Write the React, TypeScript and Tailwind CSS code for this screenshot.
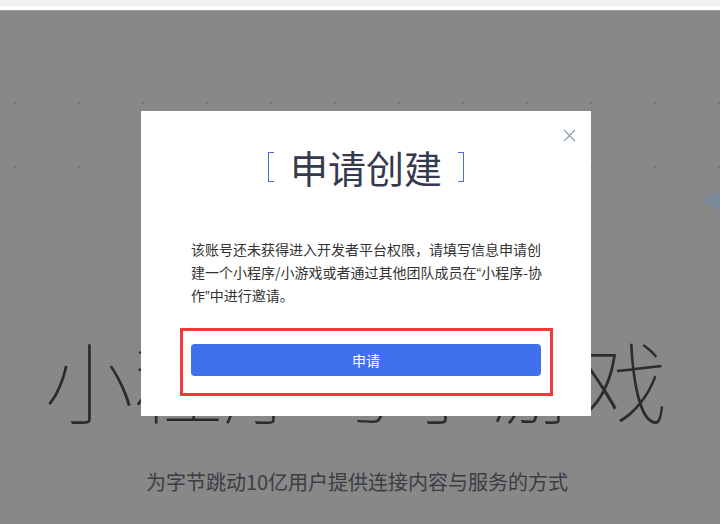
import React from "react";

const font = { fontFamily: '"Noto Sans CJK SC", "Noto Sans", sans-serif' };

function DotRow() {
  return (
    <div className="flex gap-[61px] pl-[12.5px]">
      {Array.from({ length: 12 }).map((_, i) => (
        <div key={i} className="w-[3px] h-[3px] rounded-full bg-[#767676]" />
      ))}
    </div>
  );
}

function Q({ c }: { c: string }) {
  return <span className="font-['Liberation_Sans',sans-serif]">{c}</span>;
}

export default function App() {
  return (
    <div className="relative w-[720px] h-[524px] overflow-hidden font-['Noto_Sans_CJK_SC',sans-serif]">
      <div className="h-[6px] bg-[#f1f2f4]" />
      <div className="h-[4px] bg-white" />
      <div className="relative h-[514px] bg-[#888888] border-t border-[#9c9c9c]">
        <div className="flex flex-col gap-[61px] pt-[90px]">
          <DotRow />
          <DotRow />
        </div>
        <div className="mt-[166px] text-center text-[89px] leading-none font-thin text-[#2c2c2c] pr-[8px]">
          小程序与小游戏
        </div>
        <div className="mt-[49px] text-center text-[20px] leading-none text-[#3b3d42] pr-[6px]">
          为字节跳动10亿用户提供连接内容与服务的方式
        </div>
        <svg
          className="absolute right-0 top-[179px]"
          width="20"
          height="22"
          viewBox="0 0 20 22"
        >
          <polygon points="0,11 20,0 20,22" fill="#7d8a99" />
        </svg>
      </div>

      {/* Modal */}
      <div
        className="absolute left-[141px] top-[111px] w-[450px] h-[305px] bg-white flex flex-col px-[47px]"
        style={font}
      >
        <button className="absolute left-[422px] top-[18px] w-[13px] h-[13px]">
          <svg width="13" height="13" viewBox="0 0 13 13">
            <path d="M1 1 L12 12 M12 1 L1 12" stroke="#8d9cb3" strokeWidth="1.2" />
          </svg>
        </button>
        <div className="mt-[37px] flex items-center justify-center gap-[16px]">
          <div className="w-[6px] h-[30px] border-[1.5px] border-r-0 border-[#4a6cd4]" />
          <div className="text-[38px] leading-none text-[#353b4f]">申请创建</div>
          <div className="w-[6px] h-[30px] border-[1.5px] border-l-0 border-[#4a6cd4]" />
        </div>
        <p className="mt-[52px] pl-[3px] text-[14px] leading-[22.5px] text-[#333333]">
          该账号还未获得进入开发者平台权限，请填写信息申请创建一个小程序/小游戏或者通过其他团队成员在
          <Q c="“" />
          小程序-协
          <br />
          作
          <Q c="”" />
          中进行邀请。
        </p>
        <button className="mt-auto mb-[40px] mx-[3px] h-[32px] rounded-[4px] bg-[#4170ee] text-white text-[14px]">
          申请
        </button>
      </div>

      {/* annotation */}
      <div className="absolute left-[180px] top-[328px] w-[373px] h-[68px] border-[3px] border-[#f23a3a]" />
    </div>
  );
}
